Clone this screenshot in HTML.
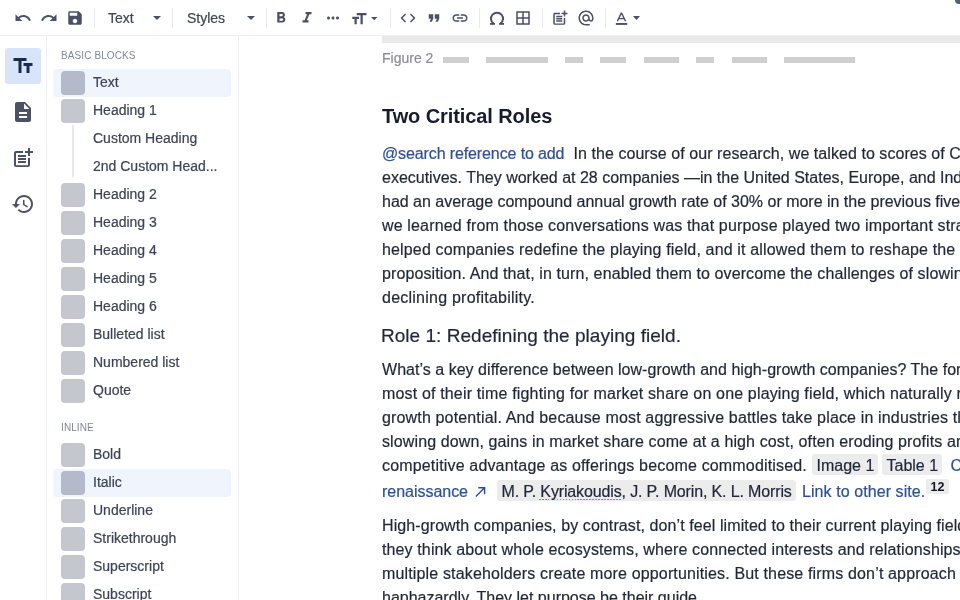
<!DOCTYPE html>
<html><head><meta charset="utf-8">
<style>
*{margin:0;padding:0;box-sizing:border-box}
html,body{width:960px;height:600px;overflow:hidden;background:#fff}
body{position:relative;font-family:"Liberation Sans",sans-serif;color:#1e2538}
#main,#side,#tb{will-change:transform}
.ln,.h3,.fig,.row .t,.sel{-webkit-text-stroke:0.2px currentColor}
.abs{position:absolute}
#tb{position:absolute;left:0;top:0;width:960px;height:36px;border-bottom:1px solid #eceef2;background:#fff}
.ic{position:absolute;fill:#4a5066}
.sep{position:absolute;top:8px;width:1px;height:20px;background:#e8eaee}
.sel{position:absolute;top:0;font-size:14px;line-height:36px;color:#3e4458;white-space:nowrap}
#rail{position:absolute;left:0;top:36px;width:47px;height:564px;border-right:1px solid #eceef2}
#rail .act{position:absolute;left:5px;top:12px;width:36px;height:36px;background:#d8e4fa;border-radius:3px}
#side{position:absolute;left:47px;top:36px;width:192px;height:564px;border-right:1px solid #eceef2}
.lbl{position:absolute;left:14px;font-size:10px;line-height:10px;color:#80869a;letter-spacing:0.1px;white-space:nowrap}
.row{position:absolute;left:6px;width:178px;height:28px}
.row.hl{background:#f0f4fd;border-radius:4px}
.sw{position:absolute;left:8px;top:2px;width:24px;height:24px;border-radius:4px;background:#c5c7cf}
.row.hl .sw{background:#b4bac9}
.row .t{position:absolute;left:40px;top:0;font-size:14px;line-height:27px;color:#3c4257;white-space:nowrap}
.tree{position:absolute;left:25px;width:2px;background:#e6e8ec}
#main{position:absolute;left:0;top:0;width:960px;height:600px;overflow:hidden;pointer-events:none}
.ln{position:absolute;left:382px;white-space:nowrap;font-size:16px;line-height:24px;color:#1f2639}
.lk{color:#2b4f9e}
.chip{background:#ececec;border-radius:3px;padding:2px 4px}
.fig{font-size:14px;line-height:14px;color:#8b8d92;white-space:nowrap}
.dash{position:absolute;top:57px;height:6px;background:#cfcfcf}
.h2{font-size:20px;line-height:24px;font-weight:bold;color:#151c2e;white-space:nowrap}
.h3{font-size:19px;line-height:19px;color:#1f2639;white-space:nowrap}
.mention{margin-right:10px}
.sp{text-decoration:underline dotted #d9534f}
.sup{font-size:12.5px;line-height:14px;font-weight:bold;color:#111522;white-space:nowrap}
.chipbg{background:#ececec;border-radius:3px}
</style></head><body>
<div id="tb">
<svg class="ic" style="left:14px;top:9px" width="18" height="18" viewBox="0 0 24 24"><path d="M12.5 8c-2.65 0-5.05.99-6.9 2.6L2 7v9h9l-3.62-3.62c1.39-1.16 3.16-1.88 5.12-1.88 3.54 0 6.55 2.31 7.6 5.5l2.37-.78C21.08 11.03 17.15 8 12.5 8z"/></svg>
<svg class="ic" style="left:40px;top:9px" width="18" height="18" viewBox="0 0 24 24"><path d="M18.4 10.6C16.55 8.99 14.15 8 11.5 8c-4.65 0-8.58 3.03-9.96 7.22L3.9 16c1.05-3.19 4.05-5.5 7.6-5.5 1.95 0 3.73.72 5.12 1.88L13 16h9V7l-3.6 3.6z"/></svg>
<svg class="ic" style="left:66px;top:9px" width="18" height="18" viewBox="0 0 24 24"><path d="M17 3H5c-1.11 0-2 .9-2 2v14c0 1.1.89 2 2 2h14c1.1 0 2-.9 2-2V7l-4-4zm-5 16c-1.66 0-3-1.34-3-3s1.34-3 3-3 3 1.34 3 3-1.34 3-3 3zm3-10H5V5h10v4z"/></svg>
<div class="sep" style="left:94px"></div>
<div class="sel" style="left:108px">Text</div>
<svg class="ic" style="left:153px;top:16px" width="8" height="4" viewBox="0 0 8 4"><path d="M0 0h8L4 4z"/></svg>
<div class="sep" style="left:172px"></div>
<div class="sel" style="left:187px">Styles</div>
<svg class="ic" style="left:247px;top:16px" width="8" height="4" viewBox="0 0 8 4"><path d="M0 0h8L4 4z"/></svg>
<div class="sep" style="left:266px"></div>
<svg class="ic" style="left:272px;top:9px" width="18" height="18" viewBox="0 0 24 24"><path d="M15.6 10.79c.97-.67 1.65-1.77 1.65-2.79 0-2.26-1.75-4-4-4H7v14h7.04c2.09 0 3.71-1.7 3.71-3.79 0-1.520-.86-2.82-2.15-3.42zM10 6.5h3c.83 0 1.5.67 1.5 1.5s-.67 1.5-1.5 1.5h-3v-3zm3.5 9H10v-3h3.5c.83 0 1.5.67 1.5 1.5s-.67 1.5-1.5 1.5z"/></svg>
<svg class="ic" style="left:298px;top:9px" width="18" height="18" viewBox="0 0 24 24"><path d="M10 4v3h2.21l-3.42 8H6v3h8v-3h-2.21l3.42-8H18V4z"/></svg>
<svg class="ic" style="left:324px;top:9px" width="18" height="18" viewBox="0 0 24 24"><path d="M6 10c-1.1 0-2 .9-2 2s.9 2 2 2 2-.9 2-2-.9-2-2-2zm12 0c-1.1 0-2 .9-2 2s.9 2 2 2 2-.9 2-2-.9-2-2-2zm-6 0c-1.1 0-2 .9-2 2s.9 2 2 2 2-.9 2-2-.9-2-2-2z"/></svg>
<svg class="ic" style="left:350px;top:10px" width="18" height="18" viewBox="0 0 24 24"><path d="M9 4v3h5v12h3V7h5V4H9zm-6 8h3v7h3v-7h3V9H3v3z"/></svg>
<svg class="ic" style="left:371px;top:16.5px" width="6.5" height="3.3" viewBox="0 0 8 4"><path d="M0 0h8L4 4z"/></svg>
<div class="sep" style="left:390px"></div>
<svg class="ic" style="left:399px;top:9px" width="18" height="18" viewBox="0 0 24 24"><path d="M9.4 16.6L4.8 12l4.6-4.6L8 6l-6 6 6 6 1.4-1.4zm5.2 0l4.6-4.6-4.6-4.6L16 6l6 6-6 6-1.4-1.4z"/></svg>
<svg class="ic" style="left:425px;top:9px" width="18" height="18" viewBox="0 0 24 24"><path d="M6 17h3l2-4V7H5v6h3zm8 0h3l2-4V7h-6v6h3z"/></svg>
<svg class="ic" style="left:451px;top:9px" width="18" height="18" viewBox="0 0 24 24"><path d="M3.9 12c0-1.71 1.39-3.1 3.1-3.1h4V7H7c-2.76 0-5 2.240-5 5s2.24 5 5 5h4v-1.9H7c-1.71 0-3.1-1.39-3.1-3.1zM8 13h8v-2H8v2zm9-6h-4v1.9h4c1.71 0 3.1 1.39 3.1 3.1s-1.39 3.1-3.1 3.1h-4V17h4c2.76 0 5-2.24 5-5s-2.24-5-5-5z"/></svg>
<div class="sep" style="left:479px"></div>
<svg class="ic" style="left:488px;top:9px" width="18" height="18" viewBox="0 0 18 18"><path d="M5.6 14.6A6 6 0 1 1 12.4 14.6" fill="none" stroke="#4b5166" stroke-width="2"/><rect x="2" y="14" width="4.9" height="1.8"/><rect x="11.1" y="14" width="4.9" height="1.8"/></svg>
<svg class="ic" style="left:514px;top:9px" width="18" height="18" viewBox="0 0 24 24"><path d="M3 3v18h18V3H3zm8 16H5v-6h6v6zm0-8H5V5h6v6zm8 8h-6v-6h6v6zm0-8h-6V5h6v6z"/></svg>
<div class="sep" style="left:542px"></div>
<svg class="ic" style="left:551px;top:9px" width="18" height="18" viewBox="0 0 24 24"><path d="M17 19.22H5V7h7V5H5c-1.1 0-2 .9-2 2v12c0 1.1.9 2 2 2h12c1.1 0 2-.9 2-2v-7h-2v7.22zM19 2h-2v3h-3c.01.01 0 2 0 2h3v2.99c.01.01 2 0 2 0V7h3V5h-3V2zM7 9h8v2H7zM7 12v2h8v-2h-3zM7 15h8v2H7z"/></svg>
<svg class="ic" style="left:577px;top:9px" width="18" height="18" viewBox="0 0 24 24"><path d="M12 1.95c-5.52 0-10 4.48-10 10s4.48 10 10 10h5v-2h-5c-4.34 0-8-3.66-8-8s3.66-8 8-8 8 3.66 8 8v1.43c0 .79-.71 1.57-1.5 1.57s-1.5-.78-1.5-1.570v-1.43c0-2.76-2.24-5-5-5s-5 2.24-5 5 2.24 5 5 5c1.38 0 2.64-.56 3.54-1.47.65.89 1.77 1.47 2.96 1.47 1.97 0 3.5-1.6 3.5-3.57v-1.43c0-5.520-4.48-10-10-10zm0 13c-1.66 0-3-1.34-3-3s1.34-3 3-3 3 1.34 3 3-1.34 3-3 3z"/></svg>
<div class="sep" style="left:605px"></div>
<svg class="ic" style="left:610px;top:8px" width="36" height="20" viewBox="0 0 36 20"><path d="M7.3 13.3L11.4 4.9 15.6 13.3M8.9 10.6h5" fill="none" stroke="#4b5166" stroke-width="1.4" stroke-linejoin="bevel"/><rect x="5.9" y="15" width="11.3" height="1.9"/><path d="M23 8h7l-3.5 4z"/></svg>
</div>
<div id="rail">
  <div class="act"></div>
  <svg class="abs" style="left:11px;top:18px;fill:#1c2a4d" width="24" height="24" viewBox="0 0 24 24"><path d="M2.5 4v3h5v12h3V7h5V4h-13zm19 5h-9v3h3v7h3v-7h3V9z"/></svg>
  <svg class="abs" style="left:11px;top:64px;fill:#4b5166" width="24" height="24" viewBox="0 0 24 24"><path d="M14 2H6c-1.1 0-1.99.9-1.99 2L4 20c0 1.1.89 2 1.99 2H18c1.1 0 2-.9 2-2V8l-6-6zm2 16H8v-2h8v2zm0-4H8v-2h8v2zm-3-5V3.5L18.5 9H13z"/></svg>
  <svg class="abs" style="left:11px;top:110.3px;fill:#4b5166" width="24" height="24" viewBox="0 0 24 24"><path d="M17 19.22H5V7h7V5H5c-1.1 0-2 .9-2 2v12c0 1.1.9 2 2 2h12c1.1 0 2-.9 2-2v-7h-2v7.22zM19 2h-2v3h-3c.01.01 0 2 0 2h3v2.99c.01.01 2 0 2 0V7h3V5h-3V2zM7 9h8v2H7zM7 12v2h8v-2h-3zM7 15h8v2H7z"/></svg>
  <svg class="abs" style="left:11.3px;top:155.7px;fill:#4b5166" width="24" height="24" viewBox="0 0 24 24"><path d="M13 3c-4.97 0-9 4.03-9 9H1l3.89 3.89.07.14L9 12H6c0-3.87 3.13-7 7-7s7 3.13 7 7-3.13 7-7 7c-1.93 0-3.68-.79-4.94-2.06l-1.42 1.42C8.27 19.99 10.51 21 13 21c4.97 0 9-4.030 9-9s-4.03-9-9-9zm-1 5v5l4.28 2.54.72-1.21-3.5-2.08V8H12z"/></svg>
</div>
<div id="side">
  <div class="lbl" style="top:14.8px">BASIC BLOCKS</div>
  <div class="row hl" style="top:33px"><div class="sw"></div><div class="t">Text</div></div>
  <div class="row" style="top:61px"><div class="sw"></div><div class="t">Heading 1</div></div>
  <div class="row" style="top:89px"><div class="t">Custom Heading</div></div>
  <div class="row" style="top:117px"><div class="t">2nd Custom Head...</div></div>
  <div class="row" style="top:145px"><div class="sw"></div><div class="t">Heading 2</div></div>
  <div class="row" style="top:173px"><div class="sw"></div><div class="t">Heading 3</div></div>
  <div class="row" style="top:201px"><div class="sw"></div><div class="t">Heading 4</div></div>
  <div class="row" style="top:229px"><div class="sw"></div><div class="t">Heading 5</div></div>
  <div class="row" style="top:257px"><div class="sw"></div><div class="t">Heading 6</div></div>
  <div class="row" style="top:285px"><div class="sw"></div><div class="t">Bulleted list</div></div>
  <div class="row" style="top:313px"><div class="sw"></div><div class="t">Numbered list</div></div>
  <div class="row" style="top:341px"><div class="sw"></div><div class="t">Quote</div></div>
  <div class="tree" style="top:89px;height:52px"></div>
  <div class="lbl" style="top:386.8px">INLINE</div>
  <div class="row" style="top:405px"><div class="sw"></div><div class="t">Bold</div></div>
  <div class="row hl" style="top:433px"><div class="sw"></div><div class="t">Italic</div></div>
  <div class="row" style="top:461px"><div class="sw"></div><div class="t">Underline</div></div>
  <div class="row" style="top:489px"><div class="sw"></div><div class="t">Strikethrough</div></div>
  <div class="row" style="top:517px"><div class="sw"></div><div class="t">Superscript</div></div>
  <div class="row" style="top:545px"><div class="sw"></div><div class="t">Subscript</div></div>
</div>
<div id="main">
<div class="abs" style="left:955px;top:-4px;width:8px;height:8px;border-radius:50%;background:#5a6072"></div>
<div class="abs" style="left:382px;top:36px;width:578px;height:7px;background:#e9e9e9"></div>
<div class="abs fig" style="left:382px;top:51px">Figure 2</div>
<div class="dash" style="left:443px;width:26px"></div>
<div class="dash" style="left:486px;width:62px"></div>
<div class="dash" style="left:565px;width:18px"></div>
<div class="dash" style="left:600px;width:26px"></div>
<div class="dash" style="left:644px;width:35px"></div>
<div class="dash" style="left:696px;width:18px"></div>
<div class="dash" style="left:732px;width:35px"></div>
<div class="dash" style="left:784px;width:71px"></div>
<div class="abs h2" style="left:382px;top:104px;letter-spacing:-0.09px">Two Critical Roles</div>
<div class="ln lk" id="p1l1a" style="top:141.6px;letter-spacing:-0.118px">@search reference to add</div>
<div class="ln" id="p1l1" style="top:141.6px;left:573.5px;letter-spacing:0.059px">In the course of our research, we talked to scores of C-level</div>
<div class="ln" id="p1l2" style="top:165.6px;letter-spacing:-0.003px">executives. They worked at 28 companies —in the United States, Europe, and India—that</div>
<div class="ln" id="p1l3" style="top:189.6px;letter-spacing:-0.011px">had an average compound annual growth rate of 30% or more in the previous five years. What</div>
<div class="ln" id="p1l4" style="top:213.6px;letter-spacing:0.153px">we learned from those conversations was that purpose played two important strategic roles. It</div>
<div class="ln" id="p1l5" style="top:237.6px;letter-spacing:0.154px">helped companies redefine the playing field, and it allowed them to reshape the value</div>
<div class="ln" id="p1l6" style="top:261.6px;letter-spacing:0.109px">proposition. And that, in turn, enabled them to overcome the challenges of slowing growth and</div>
<div class="ln" id="p1l7" style="top:285.6px;letter-spacing:0.236px">declining profitability.</div>
<div class="abs h3" id="h3" style="left:381px;top:325.7px;letter-spacing:0.029px">Role 1: Redefining the playing field.</div>
<div class="ln" id="p2l1" style="top:357.5px;letter-spacing:0.029px">What’s a key difference between low-growth and high-growth companies? The former spend</div>
<div class="ln" id="p2l2" style="top:381.5px;letter-spacing:0.161px">most of their time fighting for market share on one playing field, which naturally restricts</div>
<div class="ln" id="p2l3" style="top:405.5px;letter-spacing:0.154px">growth potential. And because most aggressive battles take place in industries that are</div>
<div class="ln" id="p2l4" style="top:429.5px;letter-spacing:0.116px">slowing down, gains in market share come at a high cost, often eroding profits and</div>
<div class="ln" id="p2l5" style="top:453.5px;letter-spacing:0.163px">competitive advantage as offerings become commoditised.</div>
<div class="abs chipbg" style="left:812px;top:454px;width:66px;height:21px"></div>
<div class="abs chipbg" style="left:882.4px;top:454px;width:59.4px;height:21px"></div>
<div class="ln" id="p2l5b" style="top:453.5px;left:816.5px">Image 1</div>
<div class="ln" id="p2l5c" style="top:453.5px;left:886.5px">Table 1</div>
<div class="ln lk" id="p2l5d" style="top:453.5px;left:950.6px">Corporate</div>
<div class="ln lk" id="p2l6" style="top:479.5px;letter-spacing:-0.026px">renaissance</div>
<svg class="abs" style="left:474px;top:486px" width="13" height="12" viewBox="0 0 13 12"><path d="M1.8 10.6L10.6 1.8M4.2 1.8h6.4v6.4" fill="none" stroke="#2b4f9e" stroke-width="1.4"/></svg>
<div class="abs chipbg" style="left:497px;top:480px;width:299px;height:20.7px"></div>
<div class="ln" id="p2l6b" style="top:479.5px;left:501.5px;letter-spacing:-0.141px">M. P. Kyriakoudis, J. P. Morin, K. L. Morris</div>
<div class="abs" style="left:539px;top:498.8px;width:83px;height:1.6px;background:repeating-linear-gradient(90deg,#dc6f6f 0 1.6px,transparent 1.6px 2.96px)"></div>
<div class="ln lk" id="p2l6c" style="top:479.5px;left:802px;letter-spacing:0.076px">Link to other site.</div>
<div class="abs chipbg" style="left:926.3px;top:479px;width:22.4px;height:14.6px;border-radius:2px"></div>
<div class="abs sup" style="left:930.5px;top:479.7px">12</div>
<div class="ln" id="p3l1" style="top:513.5px;letter-spacing:0.095px">High-growth companies, by contrast, don’t feel limited to their current playing field. Instead,</div>
<div class="ln" id="p3l2" style="top:537.5px;letter-spacing:0.122px">they think about whole ecosystems, where connected interests and relationships among</div>
<div class="ln" id="p3l3" style="top:561.5px;letter-spacing:0.151px">multiple stakeholders create more opportunities. But these firms don’t approach</div>
<div class="ln" id="p3l4" style="top:585.5px;letter-spacing:-0.004px">haphazardly. They let purpose be their guide.</div>
</div>
</body></html>
